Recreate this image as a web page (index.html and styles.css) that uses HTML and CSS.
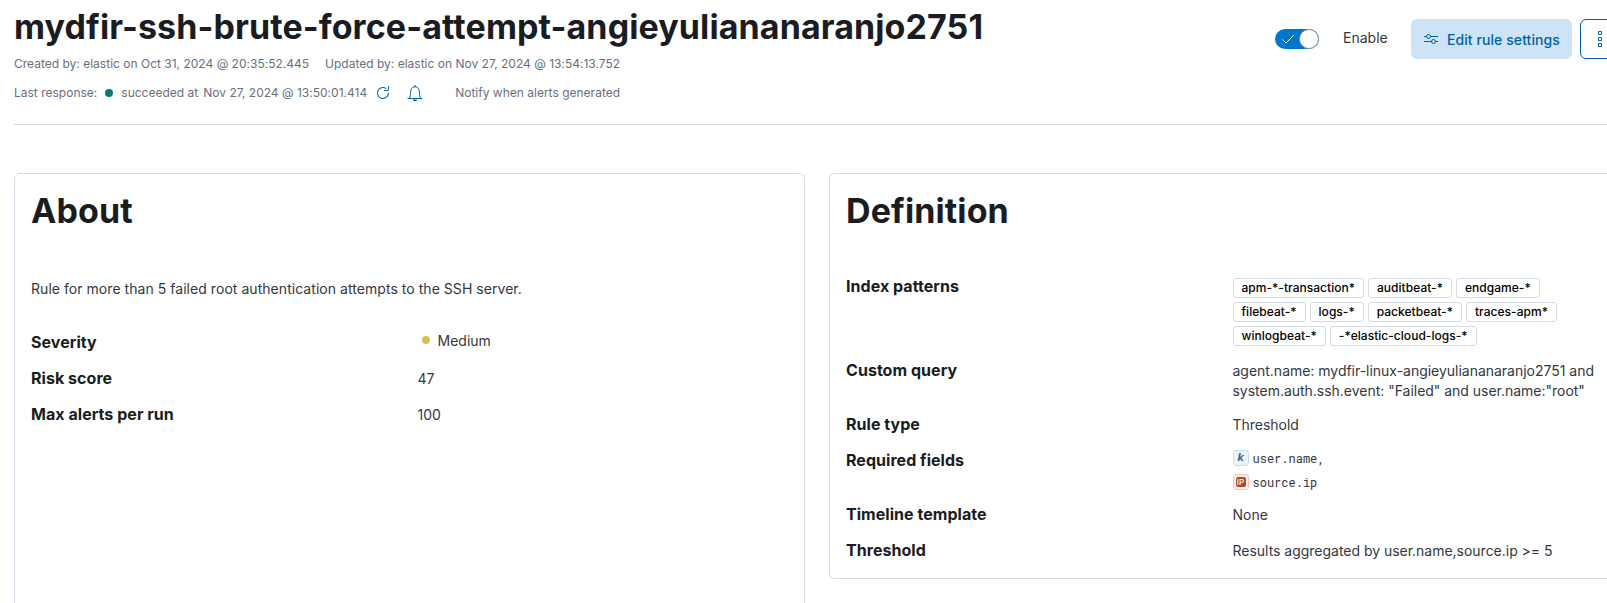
FILE: index.html
```html
<!DOCTYPE html>
<html lang="en">
<head>
<meta charset="utf-8">
<title>mydfir-ssh-brute-force-attempt-angieyuliananaranjo2751</title>
<link rel="stylesheet" href="styles.css">
</head>
<body>
<div class="page">
  <header class="header">
    <div class="header-main">
      <h1 class="title">mydfir-ssh-brute-force-attempt-angieyuliananaranjo2751</h1>
      <div class="meta"><span>Created by: elastic on Oct 31, 2024 @ 20:35:52.445</span><span>Updated by: elastic on Nov 27, 2024 @ 13:54:13.752</span></div>
      <div class="status">
        <span>Last response:</span>
        <span class="dot dot-success"></span>
        <span>succeeded at</span>
        <span class="status-date">Nov 27, 2024 @ 13:50:01.414</span>
        <svg class="icon refresh" viewBox="0 0 16 16"><path d="M11.228 2.942a.5.5 0 1 1-.538.842A5 5 0 1 0 13 8a.5.5 0 1 1 1 0 6 6 0 1 1-2.772-5.058ZM14 1.5v3A1.5 1.5 0 0 1 12.5 6h-3a.5.5 0 0 1 0-1h3a.5.5 0 0 0 .5-.5v-3a.5.5 0 1 1 1 0Z"/></svg>
        <svg class="icon bell" viewBox="0 0 16 16"><path class="stroke" d="M.5 13.500h15M2.500 13.200c.8-1.200 1-3.200 1-5.700C3.500 4 5.300 1.700 8 1.700S12.500 4 12.500 7.500c0 2.500.2 4.500 1 5.700M8 0v1.700"/><path d="M5.700 14.500h4.600C10 15.500 9.100 16 8 16s-2-.5-2.300-1.500Z"/></svg>
        <span>Notify when alerts generated</span>
      </div>
    </div>
    <div class="actions">
      <span class="switch"><svg class="check" viewBox="0 0 12 9"><path d="M.5 4.500 4 8 11.500.5"/></svg><span class="thumb"></span></span>
      <span class="switch-label">Enable</span>
      <button class="button"><svg class="icon" viewBox="0 0 16 16"><path class="stroke" d="M1 5.500h2.500M7.500 5.500H15M1 10.500h7.500M12.500 10.500H15"/><circle class="stroke" cx="5.500" cy="5.500" r="2"/><circle class="stroke" cx="10.500" cy="10.500" r="2"/></svg><span class="button-text">Edit rule settings</span></button>
      <button class="button-more" aria-label="All actions"><svg class="icon" viewBox="0 0 16 16"><path class="stroke" d="M6.500.5h3v3h-3zM6.500 6.500h3v3h-3zM6.500 12.500h3v3h-3z"/></svg></button>
    </div>
  </header>
  <main class="panels">
    <section class="panel about">
      <h2 class="title">About</h2>
      <p class="description">Rule for more than 5 failed root authentication attempts to the SSH server.</p>
      <dl class="list">
        <dt>Severity</dt><dd class="severity"><span class="dot dot-medium"></span>Medium</dd>
        <dt>Risk score</dt><dd>47</dd>
        <dt>Max alerts per run</dt><dd>100</dd>
      </dl>
    </section>
    <section class="panel definition">
      <h2 class="title">Definition</h2>
      <dl class="list">
        <dt>Index patterns</dt>
        <dd class="badges"><span class="badge">apm-*-transaction*</span><span class="badge">auditbeat-*</span><span class="badge">endgame-*</span><span class="badge">filebeat-*</span><span class="badge">logs-*</span><span class="badge">packetbeat-*</span><span class="badge">traces-apm*</span><span class="badge">winlogbeat-*</span><span class="badge">-*elastic-cloud-logs-*</span></dd>
        <dt>Custom query</dt><dd>agent.name: mydfir-linux-angieyuliananaranjo2751 and<br>system.auth.ssh.event: "Failed" and user.name:"root"</dd>
        <dt>Rule type</dt><dd>Threshold</dd>
        <dt>Required fields</dt>
        <dd class="fields">
          <div class="field"><span class="token token-keyword">k</span>user.name,</div>
          <div class="field"><span class="token token-ip"><span class="ip">IP</span></span>source.ip</div>
        </dd>
        <dt>Timeline template</dt><dd>None</dd>
        <dt>Threshold</dt><dd>Results aggregated by user.name,source.ip &gt;= 5</dd>
      </dl>
    </section>
  </main>
</div>
</body>
</html>
```
FILE: styles.css
```css
* { box-sizing: border-box; }
html, body { margin: 0; height: 603px; overflow: hidden; background: #fff; }
body { font: 14px/20px Inter, sans-serif; color: #343741; }
.page { width: 1620px; height: 603px; padding-left: 14px; overflow: hidden; display: flex; flex-direction: column; }
.header { height: 125px; flex: none; display: flex; justify-content: space-between; padding-top: 7px; border-bottom: 1px solid #d3dae6; }
.title { margin: 0; font-size: 34px; line-height: 40px; font-weight: 700; letter-spacing: 0.095px; color: #1a1c21; white-space: nowrap; font-feature-settings: "calt" 0; }
.meta, .status { display: flex; font-size: 12px; line-height: 18px; letter-spacing: 0.005px; color: #69707d; white-space: nowrap; }
.meta { gap: 16px; margin-top: 8px; }
.status { margin-top: 10px; height: 20px; align-items: center; }
.dot { width: 8px; height: 8px; border-radius: 50%; flex: none; }
.dot-success { background: #017d73; margin: 0 8px; }
.status-date { margin-left: 5px; }
.icon { width: 16px; height: 16px; fill: #0061a6; flex: none; }
.stroke { fill: none; stroke: #0061a6; stroke-width: 1; }
.refresh { margin-left: 8px; }
.bell { margin: 0 32px 0 16px; }
.actions { display: flex; align-items: flex-start; padding-top: 12px; width: 345px; flex: none; }
.switch { width: 44px; height: 20px; margin-top: 10px; border-radius: 10px; background: #0077cc; display: flex; justify-content: space-between; align-items: center; padding-left: 7px; flex: none; }
.check { width: 12px; height: 9px; fill: none; stroke: #fff; stroke-width: 1; }
.thumb { width: 20px; height: 20px; border-radius: 50%; border: 1px solid #8c929c; background: #fff; }
.switch-label { margin: 9px 23px 0 24px; width: 45px; letter-spacing: 0.02px; }
.button { width: 161px; height: 40px; display: flex; align-items: center; gap: 8px; padding: 0 12px; border: 0; border-radius: 6px; background: #cce4f5; color: #0061a6; font: 500 14px/20px Inter, sans-serif; letter-spacing: 0.08px; white-space: nowrap; }
.button-text { padding-top: 2px; }
.button-more { width: 40px; height: 40px; margin-left: 8px; border: 1px solid #0061a6; border-radius: 6px; background: #fff; padding: 0; flex: none; display: grid; place-items: center; }
.panels { display: flex; gap: 24px; padding-top: 48px; align-items: flex-start; }
.panel { width: 791px; flex: none; padding: 17px 16px 16px; border: 1px solid #d3dae6; border-radius: 6px; }
.about { height: 470px; }
.definition { height: 406px; }
.description { margin: 48px 0 0; letter-spacing: 0.045px; }
.list { display: grid; grid-template-columns: 386.5px 1fr; row-gap: 12px; margin: 0; }
.about .list { margin-top: 31px; }
.definition .list { margin-top: 43px; }
.list dt { font-size: 16px; line-height: 24px; font-weight: 700; letter-spacing: 0.04px; color: #1a1c21; }
.list dd { margin: 3px 0 -1px; white-space: nowrap; }
.definition .list dd { letter-spacing: -0.02px; }
.list .severity { display: flex; align-items: center; gap: 7.5px; margin: 0; padding: 0 0 3px 4.5px; }
.dot-medium { background: #d6bf57; margin-bottom: 2px; }
.list .badges { display: flex; flex-wrap: wrap; gap: 4px; margin: 0; padding: 4px 40px 0 0; }
.badge { height: 20px; padding: 0 8px; border: 1px solid #d3dae6; border-radius: 3px; font-size: 12px; line-height: 18px; font-weight: 500; letter-spacing: 0.03px; color: #000; }
.list .fields { margin: 0 0 -2px; display: grid; gap: 4px; }
.field { display: flex; align-items: center; gap: 4px; height: 20px; letter-spacing: 0; font: 12px/20px "Roboto Mono", "DejaVu Sans Mono", monospace; }
.token { width: 16px; height: 16px; border: 1px solid; border-radius: 3px; display: grid; place-items: center; }
.token-keyword { background: #edf3f9; border-color: #c9dcec; color: #387091; font: italic 700 10px/14px "DejaVu Sans", sans-serif; }
.token-ip { background: #fdeee9; border-color: #f5c9bd; }
.ip { width: 10px; height: 10px; border-radius: 2px; background: #aa4a32; color: #fff; font: 500 8px/10px Inter, sans-serif; text-align: center; }
```
